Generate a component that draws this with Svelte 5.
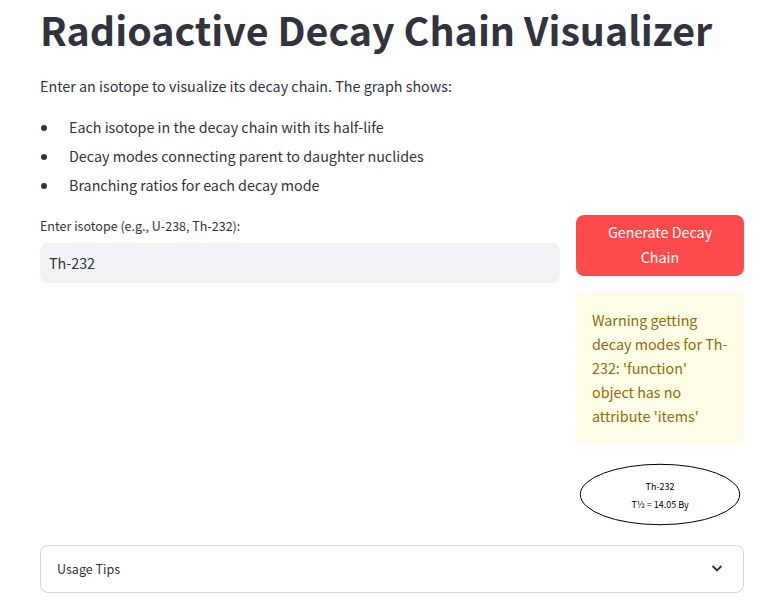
<script>
  let isotope = $state('Th-232');
  const facts = [
    'Each isotope in the decay chain with its half-life',
    'Decay modes connecting parent to daughter nuclides',
    'Branching ratios for each decay mode',
  ];
</script>

<main>
  <h1>Radioactive Decay Chain Visualizer</h1>
  <p class="intro">Enter an isotope to visualize its decay chain. The graph shows:</p>
  <ul>
    {#each facts as fact}
      <li>{fact}</li>
    {/each}
  </ul>

  <div class="columns">
    <div class="wide">
      <label for="isotope">Enter isotope (e.g., U-238, Th-232):</label>
      <input id="isotope" type="text" bind:value={isotope} />
    </div>
    <div class="narrow">
      <button type="button">Generate Decay Chain</button>
      <div class="warning" role="alert">
        Warning getting decay modes for Th-232: 'function' object has no attribute 'items'
      </div>
      <svg class="graph" viewBox="0 0 168 69" role="img" aria-label="Decay chain graph">
        <ellipse cx="84" cy="34.5" rx="79.7" ry="30.2" />
        <text x="84" y="30">Th-232</text>
        <text x="84" y="48">T½ = 14.05 By</text>
      </svg>
    </div>
  </div>

  <details>
    <summary>
      <span>Usage Tips</span>
      <svg class="chevron" viewBox="0 0 12 12" aria-hidden="true">
        <path d="M1.6 3 L6 7.4 L10.4 3" />
      </svg>
    </summary>
  </details>
</main>

<style>
  :global(body) {
    margin: 0;
    background: #fff;
  }

  main {
    box-sizing: border-box;
    padding: 0 35px 13px 40px;
    color: #31333f;
    font-family: 'Source Sans Pro', 'Noto Sans CJK SC', sans-serif;
    font-size: 16px;
    font-size-adjust: 0.486;
    line-height: 24px;
  }

  h1 {
    margin: 0;
    padding: 2px 0 18px;
    font-size: 44px;
    font-weight: 700;
    line-height: 54px;
  }

  .intro {
    margin: 0 0 16px;
  }

  ul {
    display: flex;
    flex-direction: column;
    gap: 5px;
    margin: 0 0 18px;
    padding: 1px 0 0;
  }

  li {
    margin-left: 19px;
    padding-left: 10px;
  }

  .columns {
    display: flex;
    gap: 16px;
    margin-bottom: 16px;
  }

  .wide {
    flex: 1 1 calc(75% - 16px);
    min-width: 0;
  }

  .narrow {
    display: flex;
    flex: 1 1 calc(25% - 16px);
    flex-direction: column;
    gap: 16px;
    min-width: 0;
  }

  label {
    display: block;
    margin-bottom: 6px;
    font-size: 14px;
    line-height: 22px;
  }

  input {
    box-sizing: border-box;
    width: 100%;
    height: 40px;
    padding: 0 9px 2px;
    border: 0;
    border-radius: 8px;
    background: #f0f2f6;
    color: inherit;
    font: inherit;
    font-size-adjust: inherit;
  }

  button {
    padding: 4px 12px 7px;
    border: 0;
    border-radius: 8px;
    background: #ff4b4b;
    color: #fff;
    font: inherit;
    font-size-adjust: inherit;
    line-height: 25px;
    cursor: pointer;
  }

  .warning {
    padding: 16px;
    border-radius: 8px;
    background: #fffce7;
    color: #926c05;
  }

  .graph {
    display: block;
    width: 100%;
  }

  .graph ellipse {
    fill: none;
    stroke: #000;
  }

  .graph text {
    fill: #000;
    font-size: 10px;
    text-anchor: middle;
  }

  details {
    border: 1px solid #d6d6d9;
    border-radius: 8px;
  }

  summary {
    display: flex;
    align-items: center;
    justify-content: space-between;
    padding: 11px 20px 11px 16px;
    font-size: 14px;
    list-style: none;
    cursor: pointer;
  }

  .chevron {
    width: 12px;
    height: 12px;
    fill: none;
    stroke: #31333f;
    stroke-width: 2;
  }
</style>
